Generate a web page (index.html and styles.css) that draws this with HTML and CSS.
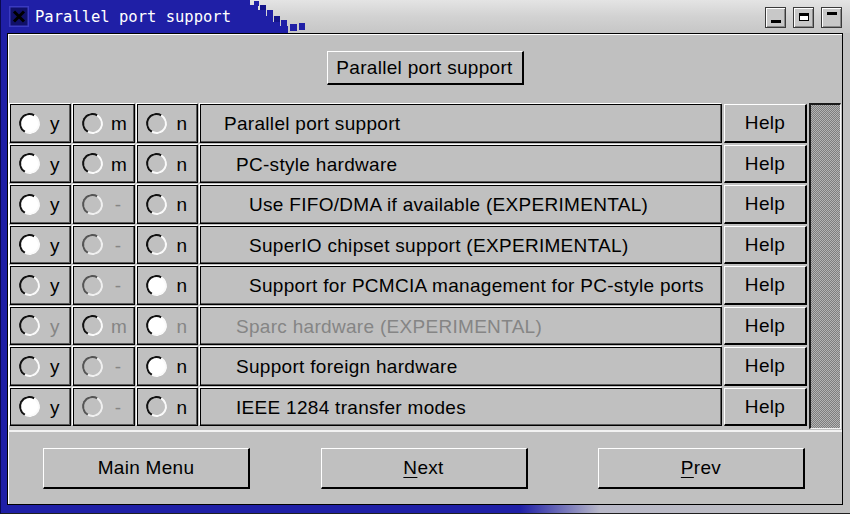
FILE: index.html
```html
<!DOCTYPE html>
<html>
<head>
<meta charset="utf-8">
<link rel="stylesheet" href="styles.css">
</head>
<body>
<div class="window">
  <div class="titlebar">
    <svg class="close-ico" width="20" height="21" viewBox="0 0 20 21">
      <rect x="0" y="0" width="20" height="21" fill="#3a3ac0"/>
      <rect x="1.5" y="1.5" width="17" height="18" fill="#101068"/>
      <path d="M5 5.5 L15 15.5 M15 5.5 L5 15.5" stroke="#000" stroke-width="3"/>
    </svg>
    <span class="title">Parallel port support</span>
    <svg class="checker" width="62" height="33" viewBox="0 0 62 33">
      <rect x="0" y="0" width="4" height="33" fill="#1f1fa6"/>
      <rect x="4" y="5" width="8" height="28" fill="#1f1fa6"/>
      <rect x="12" y="10" width="8" height="23" fill="#1f1fa6"/>
      <rect x="20" y="16" width="7" height="17" fill="#1f1fa6"/>
      <rect x="27" y="22" width="7" height="11" fill="#1f1fa6"/>
      <rect x="8" y="1" width="5" height="5" fill="#1f1fa6"/>
      <rect x="14" y="5" width="6" height="5" fill="#14148a"/>
      <rect x="21" y="10" width="6" height="6" fill="#1f1fa6"/>
      <rect x="28" y="16" width="6" height="6" fill="#14148a"/>
      <rect x="35" y="20" width="6" height="6" fill="#1f1fa6"/>
      <rect x="34" y="26" width="8" height="7" fill="#1f1fa6"/>
      <rect x="44" y="24" width="7" height="7" fill="#1f1fa6"/>
      <rect x="53" y="23" width="6" height="7" fill="#1f1fa6"/>
    </svg>
    <div class="wm-buttons">
      <span class="wm-btn"><i class="ico-min"></i></span>
      <span class="wm-btn"><i class="ico-max"></i></span>
      <span class="wm-btn"><i class="ico-shade"></i></span>
    </div>
  </div>
  <div class="frame">
    <div class="client">
      <div class="header">
        <button class="btn top-btn">Parallel port support</button>
      </div>
      <div class="list">
        <div class="rows">
          <div class="cell opt"><span class="radio on"></span><span class="lbl">y</span></div>
          <div class="cell opt"><span class="radio"></span><span class="lbl">m</span></div>
          <div class="cell opt"><span class="radio"></span><span class="lbl">n</span></div>
          <div class="cell text lv0">Parallel port support</div>
          <button class="btn help">Help</button>

          <div class="cell opt"><span class="radio on"></span><span class="lbl">y</span></div>
          <div class="cell opt"><span class="radio"></span><span class="lbl">m</span></div>
          <div class="cell opt"><span class="radio"></span><span class="lbl">n</span></div>
          <div class="cell text lv1">PC-style hardware</div>
          <button class="btn help">Help</button>

          <div class="cell opt"><span class="radio on"></span><span class="lbl">y</span></div>
          <div class="cell opt"><span class="radio off"></span><span class="lbl dim">-</span></div>
          <div class="cell opt"><span class="radio"></span><span class="lbl">n</span></div>
          <div class="cell text lv2">Use FIFO/DMA if available (EXPERIMENTAL)</div>
          <button class="btn help">Help</button>

          <div class="cell opt"><span class="radio on"></span><span class="lbl">y</span></div>
          <div class="cell opt"><span class="radio off"></span><span class="lbl dim">-</span></div>
          <div class="cell opt"><span class="radio"></span><span class="lbl">n</span></div>
          <div class="cell text lv2">SuperIO chipset support (EXPERIMENTAL)</div>
          <button class="btn help">Help</button>

          <div class="cell opt"><span class="radio"></span><span class="lbl">y</span></div>
          <div class="cell opt"><span class="radio off"></span><span class="lbl dim">-</span></div>
          <div class="cell opt"><span class="radio on"></span><span class="lbl">n</span></div>
          <div class="cell text lv2">Support for PCMCIA management for PC-style ports</div>
          <button class="btn help">Help</button>

          <div class="cell opt"><span class="radio"></span><span class="lbl dim">y</span></div>
          <div class="cell opt"><span class="radio"></span><span class="lbl dim">m</span></div>
          <div class="cell opt"><span class="radio on"></span><span class="lbl dim">n</span></div>
          <div class="cell text lv1 dim">Sparc hardware (EXPERIMENTAL)</div>
          <button class="btn help">Help</button>

          <div class="cell opt"><span class="radio"></span><span class="lbl">y</span></div>
          <div class="cell opt"><span class="radio off"></span><span class="lbl dim">-</span></div>
          <div class="cell opt"><span class="radio on"></span><span class="lbl">n</span></div>
          <div class="cell text lv1">Support foreign hardware</div>
          <button class="btn help">Help</button>

          <div class="cell opt"><span class="radio on"></span><span class="lbl">y</span></div>
          <div class="cell opt"><span class="radio off"></span><span class="lbl dim">-</span></div>
          <div class="cell opt"><span class="radio"></span><span class="lbl">n</span></div>
          <div class="cell text lv1">IEEE 1284 transfer modes</div>
          <button class="btn help">Help</button>
        </div>
        <div class="scrollbar"></div>
      </div>
      <div class="footer">
        <button class="btn big">Main Menu</button>
        <button class="btn big"><u>N</u>ext</button>
        <button class="btn big"><u>P</u>rev</button>
      </div>
    </div>
  </div>
</div>
</body>
</html>
```

FILE: styles.css
```css
* { box-sizing: border-box; }

html, body {
  margin: 0;
  padding: 0;
}

body {
  width: 850px;
  height: 514px;
  overflow: hidden;
  background: #c0c0c0;
  font-family: "Liberation Sans", Arial, sans-serif;
  font-size: 19px;
  letter-spacing: 0.3px;
  color: #000;
}

.window {
  width: 850px;
  height: 514px;
  display: flex;
  flex-direction: column;
}

/* ---------- title bar ---------- */
.titlebar {
  position: relative;
  height: 33px;
  flex: none;
  display: flex;
  align-items: center;
  padding-left: 9px;
  background:
    linear-gradient(to right, #1f1fa6 0, #1f1fa6 246px, transparent 246px),
    linear-gradient(to bottom, #e4e4e4 0, #d2d2d2 50%, #c6c6c6 100%);
  box-shadow: inset 1px 0 0 #0a0a50;
}

.close-ico {
  flex: none;
  display: block;
}

.title {
  margin-left: 6px;
  font-family: "DejaVu Sans Mono", "Liberation Mono", monospace;
  font-size: 15.5px;
  letter-spacing: 0;
  color: #fff;
  white-space: nowrap;
}

.checker {
  position: absolute;
  left: 246px;
  top: 0;
}

.wm-buttons {
  margin-left: auto;
  margin-right: 8px;
  display: flex;
  gap: 7px;
  margin-top: 1px;
}

.wm-btn {
  position: relative;
  width: 21px;
  height: 21px;
  background: #c8c8c8;
  border: 1px solid #3a3a3a;
  box-shadow: inset 1px 1px 0 #fff, inset -1px -1px 0 #8a8a8a;
  display: flex;
  align-items: center;
  justify-content: center;
}

.ico-min {
  display: block;
  width: 10px;
  height: 3px;
  background: #000;
  margin-top: 8px;
}

.ico-max {
  display: block;
  width: 10px;
  height: 8px;
  border: 1px solid #000;
  border-top-width: 3px;
  background: #fff;
}

.ico-shade {
  display: block;
  width: 10px;
  height: 3px;
  background: #000;
  margin-top: -7px;
}

/* ---------- window frame ---------- */
.frame {
  flex: 1;
  display: flex;
  padding: 0 7px 9px 7px;
  background: linear-gradient(to right, #1f1fa6 0, #1f1fa6 520px, #b8b8c8 600px, #c0c0c0 100%);
  box-shadow: inset 1px 0 0 #0a0a50, inset 0 -1px 0 #202020;
}

.client {
  flex: 1;
  display: flex;
  flex-direction: column;
  background: #c0c0c0;
  border: 1px solid #000;
  box-shadow: inset 1px 1px 0 #fff;
}

/* ---------- buttons ---------- */
.btn {
  font-family: "Liberation Sans", Arial, sans-serif;
  font-size: 19px;
  letter-spacing: 0.3px;
  color: #000;
  background: #c0c0c0;
  border-style: solid;
  border-width: 1px 2px 2px 1px;
  border-color: #fff #000 #000 #fff;
  padding: 0;
  margin: 0;
  display: flex;
  align-items: center;
  justify-content: center;
}

.btn u {
  text-decoration: underline;
  text-underline-offset: 3px;
}

.header {
  height: 67px;
  flex: none;
  display: flex;
  align-items: center;
  justify-content: center;
}

.top-btn {
  width: 197px;
  height: 34px;
  padding-top: 1px;
}

/* ---------- option list ---------- */
.list {
  height: 329px;
  flex: none;
  display: flex;
  gap: 2px;
  padding: 3px 1px 0 2px;
}

.rows {
  display: grid;
  grid-template-columns: 61px 62px 61px 522px 83px;
  grid-auto-rows: 38.5px;
  column-gap: 2px;
  row-gap: 2px;
  align-content: start;
}

.cell {
  background: #c0c0c0;
  border: 1px solid #000;
  box-shadow: -1px -1px 0 #fff, inset -1px -1px 0 #5a5a5a;
  display: flex;
  align-items: center;
}

.opt {
  padding-left: 8px;
}

.radio {
  flex: none;
  width: 21px;
  height: 21px;
  border-radius: 50%;
  border: 2px solid;
  border-color: #111 #fafafa #fafafa #111;
  transform: rotate(-15deg);
}

.radio.on {
  background: #fff;
}

.radio.off {
  border-color: #555 #f0f0f0 #f0f0f0 #555;
}

.lbl {
  margin-left: 8px;
  width: 14px;
  text-align: center;
  padding-top: 2px;
}

.dim {
  color: #858585;
}

.text {
  white-space: nowrap;
  padding-top: 2px;
}

.lv0 { padding-left: 23px; }
.lv1 { padding-left: 35px; }
.lv2 { padding-left: 48px; }

.help {
  height: 38.5px;
  padding-top: 1px;
}

.scrollbar {
  width: 32px;
  height: 326px;
  margin-top: -1px;
  border-style: solid;
  border-width: 2px 1px 1px 2px;
  border-color: #1a1a1a #f4f4f4 #f4f4f4 #1a1a1a;
  background-color: #9c9c9c;
  background-image: conic-gradient(#7e7e7e 25%, #b4b4b4 0 50%, #7e7e7e 0 75%, #b4b4b4 0);
  background-size: 2px 2px;
}

/* ---------- footer ---------- */
.footer {
  flex: 1;
  display: flex;
  justify-content: space-between;
  align-items: flex-start;
  border-top: 2px solid #f2f2f2;
  padding: 16px 37px 0 35px;
}

.big {
  width: 207px;
  height: 41px;
}
```
